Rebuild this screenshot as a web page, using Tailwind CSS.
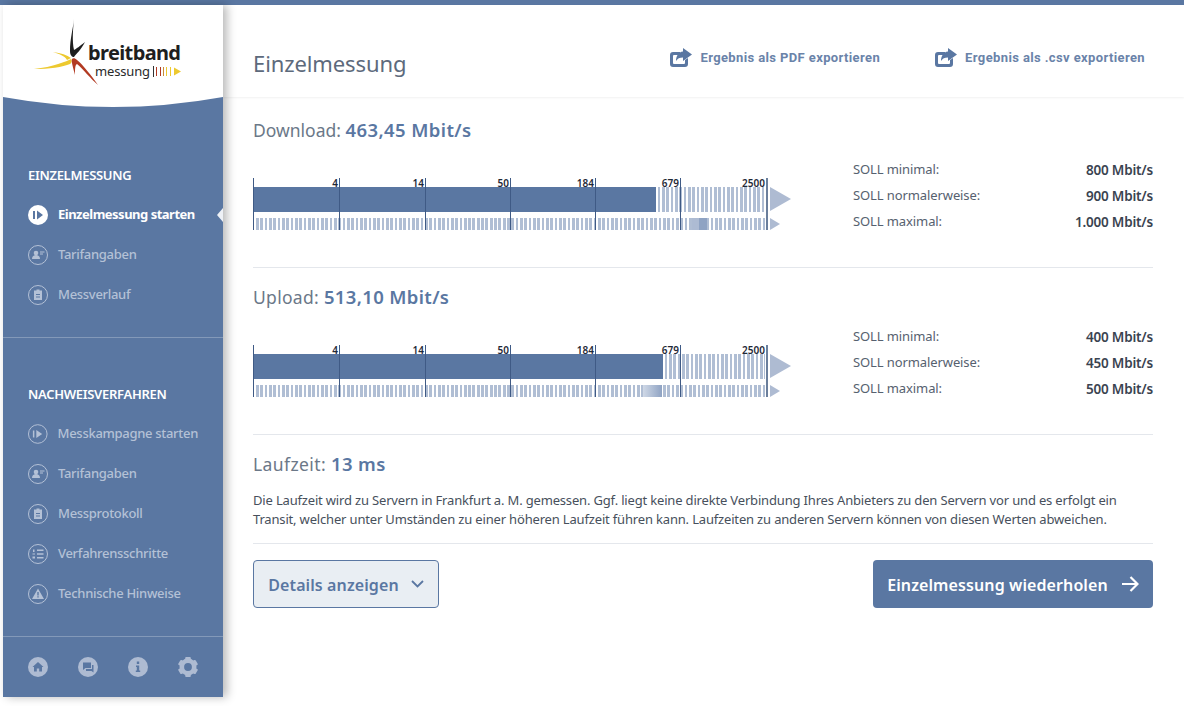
<!DOCTYPE html>
<html lang="de">

<head>
    <meta charset="UTF-8" />
    <meta name="viewport" content="width=device-width, initial-scale=1.0" />
    <title>Breitbandmessung</title>
    <script src="https://cdn.jsdelivr.net/npm/@tailwindcss/browser@4"></script>
</head>

<body class="bg-white h-[706px] overflow-hidden font-['Noto_Sans',sans-serif] text-[#4a5568]">
    <div class="h-[5px] bg-[#5a77a2]"></div>

    <div class="flex">
        <!-- sidebar -->
        <aside class="relative z-10 ml-[3px] w-[220px] h-[692px] shrink-0 bg-[#5a77a2] shadow-[4px_0_9px_rgba(0,0,0,0.28)] flex flex-col whitespace-nowrap">
            <svg class="block shrink-0" width="220" height="103" viewBox="0 0 220 103">
                <path d="M0 0H220V92Q110 112 0 92Z" fill="#fff" />
                <path d="M71 14C70 24 67 34 67 46C67 50 69 52 71 52C73 49 78 45 82 37C77 41 73 44 71 45C69 36 70 24 71 14Z" fill="#1e1e1e" />
                <path d="M68 54C64 56 50 62 31 64C46 64 60 62 67 59C69 58 69 55 68 54ZM68 53C64 50 58 48 50 47C56 49 62 51 64 55Z" fill="#edc92f" />
                <path d="M69 54C68 56 70 62 72 70C72 64 72 60 74 59C80 64 88 74 95 80C88 70 80 60 74 55C72 53 70 53 69 54Z" fill="#b23a22" />
                <text x="85" y="55" font-family="'Noto Sans',sans-serif" font-weight="700" font-size="20" fill="#1e1e1e" textLength="93">breitband</text>
                <text x="92" y="71" font-family="'Noto Sans',sans-serif" font-size="13" fill="#2a2a2a" textLength="55">messung</text>
                <path d="M150 61h1v11h-1z" fill="#333" />
                <path d="M153 62h1v9h-1zM157 62h1v9h-1z" fill="#b23a22" />
                <path d="M160 62h1v9h-1z" fill="#c98a3a" />
                <path d="M163 62h1v9h-1zM167 62h1v9h-1z" fill="#edc92f" />
                <path d="M171 62.500l7 4-7 4z" fill="#edc92f" />
            </svg>

            <div class="px-[25px] pt-[57px] text-[13px] tracking-[-0.3px] text-[#b4c1d6] font-medium">
                <h2 class="h-[20px] leading-[20px] text-[13px] font-semibold text-white">EINZELMESSUNG</h2>
                <nav class="mt-[10px] flex flex-col">
                    <a class="relative flex items-center gap-[10px] h-[40px] text-white font-bold tracking-[-0.5px]">
                        <svg width="20" height="20" viewBox="0 0 20 20"><circle cx="10" cy="10" r="10" fill="#fff" /><path d="M5 6h2v8H5zM9 5.500l6 4.500-6 4.500z" fill="#5a77a2" /></svg>
                        Einzelmessung starten
                        <span class="absolute right-[-25px] top-[13px] w-0 h-0 border-y-[7px] border-y-transparent border-r-[6px] border-r-[#eef1f6]"></span>
                    </a>
                    <a class="flex items-center gap-[10px] h-[40px]">
                        <svg width="20" height="20" viewBox="0 0 20 20"><circle cx="10" cy="10" r="9.500" fill="none" stroke="#b4c1d6" /><circle cx="8" cy="8" r="2.300" fill="#b4c1d6" /><path d="M4 14c0-3 2-4 4-4s4 1 4 4zM12 6.500h4.500v1H12zM12 8.500h3v1h-3z" fill="#b4c1d6" /></svg>
                        Tarifangaben
                    </a>
                    <a class="flex items-center gap-[10px] h-[40px]">
                        <svg width="20" height="20" viewBox="0 0 20 20"><circle cx="10" cy="10" r="9.500" fill="none" stroke="#b4c1d6" /><path d="M6 5.500h2.500V4.500h3v1H14v9.500H6zM8 9v1h4V9zM8 11.500v1h4v-1z" fill="#b4c1d6" fill-rule="evenodd" /></svg>
                        Messverlauf
                    </a>
                </nav>
            </div>

            <div class="mt-[22px] border-t border-white/25"></div>

            <div class="px-[25px] pt-[46px] text-[13px] tracking-[-0.3px] text-[#b4c1d6] font-medium">
                <h2 class="h-[20px] leading-[20px] text-[13px] font-semibold text-white">NACHWEISVERFAHREN</h2>
                <nav class="mt-[10px] flex flex-col">
                    <a class="flex items-center gap-[10px] h-[40px]">
                        <svg width="20" height="20" viewBox="0 0 20 20"><circle cx="10" cy="10" r="9.500" fill="none" stroke="#b4c1d6" /><path d="M5 6.500h1.500v7H5zM8.500 6l6 4-6 4z" fill="#b4c1d6" /></svg>
                        Messkampagne starten
                    </a>
                    <a class="flex items-center gap-[10px] h-[40px]">
                        <svg width="20" height="20" viewBox="0 0 20 20"><circle cx="10" cy="10" r="9.500" fill="none" stroke="#b4c1d6" /><circle cx="8" cy="8" r="2.300" fill="#b4c1d6" /><path d="M4 14c0-3 2-4 4-4s4 1 4 4zM12 6.500h4.500v1H12zM12 8.500h3v1h-3z" fill="#b4c1d6" /></svg>
                        Tarifangaben
                    </a>
                    <a class="flex items-center gap-[10px] h-[40px]">
                        <svg width="20" height="20" viewBox="0 0 20 20"><circle cx="10" cy="10" r="9.500" fill="none" stroke="#b4c1d6" /><path d="M6 5.500h2.500V4.500h3v1H14v9.500H6zM8 9v1h4V9zM8 11.500v1h4v-1z" fill="#b4c1d6" fill-rule="evenodd" /></svg>
                        Messprotokoll
                    </a>
                    <a class="flex items-center gap-[10px] h-[40px]">
                        <svg width="20" height="20" viewBox="0 0 20 20"><circle cx="10" cy="10" r="9.500" fill="none" stroke="#b4c1d6" /><path d="M9 5.500h6.500v1.500H9zM9 9.200h6.500v1.500H9zM9 13h6.500v1.500H9zM5 5.500h1.500v2.500H5zM4.500 9.500h2.500v1H4.500zM4.500 12.500h2.500v2H4.500z" fill="#b4c1d6" /></svg>
                        Verfahrensschritte
                    </a>
                    <a class="flex items-center gap-[10px] h-[40px]">
                        <svg width="20" height="20" viewBox="0 0 20 20"><circle cx="10" cy="10" r="9.500" fill="none" stroke="#b4c1d6" /><path d="M10 4.500l6 10.500H4zM9.300 8v3.500h1.400V8zM9.300 12.300v1.300h1.400v-1.300z" fill="#b4c1d6" fill-rule="evenodd" /></svg>
                        Technische Hinweise
                    </a>
                </nav>
            </div>

            <div class="mt-[22px] border-t border-white/25"></div>

            <div class="flex gap-[30px] px-[25px] pt-[20px]">
                <svg width="20" height="20" viewBox="0 0 20 20"><circle cx="10" cy="10" r="10" fill="#aebbd2" /><path d="M10 5l5.500 5H14v4.500h-2.800V11.500H8.800v3H6V10H4.500z" fill="#5a77a2" /></svg>
                <svg width="20" height="20" viewBox="0 0 20 20"><circle cx="10" cy="10" r="10" fill="#aebbd2" /><path d="M5 5.500h8v5.500H7.500L5 13zM14 8h1.500v7.500l-2-1.500H8v-2h6z" fill="#5a77a2" /></svg>
                <svg width="20" height="20" viewBox="0 0 20 20"><circle cx="10" cy="10" r="10" fill="#aebbd2" /><path d="M8.800 4.500h2.400v2.400H8.800zM8 8.500h3.200v5H12.200v1.500H7.800v-1.500h1V10H8z" fill="#5a77a2" /></svg>
                <svg width="20" height="20" viewBox="-10 -10 20 20">
                    <circle r="6.200" fill="none" stroke="#aebbd2" stroke-width="4.600" />
                    <g fill="#aebbd2">
                        <rect x="-2.800" y="-10" width="5.600" height="4" rx="1" />
                        <rect x="-2.800" y="-10" width="5.600" height="4" rx="1" transform="rotate(60)" />
                        <rect x="-2.800" y="-10" width="5.600" height="4" rx="1" transform="rotate(120)" />
                        <rect x="-2.800" y="-10" width="5.600" height="4" rx="1" transform="rotate(180)" />
                        <rect x="-2.800" y="-10" width="5.600" height="4" rx="1" transform="rotate(240)" />
                        <rect x="-2.800" y="-10" width="5.600" height="4" rx="1" transform="rotate(300)" />
                    </g>
                </svg>
            </div>
        </aside>

        <!-- main -->
        <main class="flex-1 min-w-0">
            <header class="h-[92px] pl-[30px] pr-[39px] flex items-center justify-between shadow-[0_1px_2px_rgba(0,0,0,0.06)]">
                <h1 class="text-[22px] tracking-[-0.1px] text-[#5d6a7c] pt-[23px] leading-[34px]">Einzelmessung</h1>
                <div class="flex items-center gap-[55px] font-['Roboto',sans-serif] font-bold text-[13px] tracking-[0.38px] text-[#6a83a9] pt-[13px]">
                    <a class="flex items-center gap-[8px]">
                        <svg width="22" height="19" viewBox="0 0 22 19"><path d="M3 4h7v3H4a1 1 0 0 0-1 1v7a1 1 0 0 0 1 1h10a1 1 0 0 0 1-1v-3l3-2v6a3 3 0 0 1-3 3H3a3 3 0 0 1-3-3V7a3 3 0 0 1 3-3z" fill="#5a77a2" /><path d="M13 0l9 6.500-9 6.500V9.500c-3.500 0-5.500 1-7 3.500C6 8 8.500 4 13 3.500z" fill="#5a77a2" /></svg>
                        Ergebnis als PDF exportieren
                    </a>
                    <a class="flex items-center gap-[8px]">
                        <svg width="22" height="19" viewBox="0 0 22 19"><path d="M3 4h7v3H4a1 1 0 0 0-1 1v7a1 1 0 0 0 1 1h10a1 1 0 0 0 1-1v-3l3-2v6a3 3 0 0 1-3 3H3a3 3 0 0 1-3-3V7a3 3 0 0 1 3-3z" fill="#5a77a2" /><path d="M13 0l9 6.500-9 6.500V9.500c-3.500 0-5.500 1-7 3.500C6 8 8.500 4 13 3.500z" fill="#5a77a2" /></svg>
                        Ergebnis als .csv exportieren
                    </a>
                </div>
            </header>

            <div class="pl-[30px] pr-[31px]">
                <!-- download -->
                <section class="h-[171px] pt-[20px] border-b border-[#e4e7ec]">
                    <h3 class="h-[26px] leading-[26px] text-[17.500px] text-[#6b7888]">Download: <span class="font-semibold text-[18.500px] tracking-[0.4px] text-[#5a77a2]">463,45 Mbit/s</span></h3>
                    <div class="mt-[35px] flex justify-between">
                        <div class="relative w-[538px] h-[55px] pt-[9px] flex flex-col gap-[6px] text-[#1f2937]">
                            <div class="flex h-[25px]">
                                <div class="w-[403px] bg-[#5a77a2]"></div>
                                <div class="w-[109px] bg-[repeating-linear-gradient(90deg,#fff_0,#fff_1.63px,#b0bed4_1.63px,#b0bed4_4.33px)]"></div>
                                <div class="ml-[5px] w-0 h-0 border-y-[12.500px] border-y-transparent border-l-[21px] border-l-[#aebbd2]"></div>
                            </div>
                            <div class="relative flex h-[12px] pl-[3px]">
                                <div class="w-[509px] bg-[repeating-linear-gradient(90deg,#b0bed4_0,#b0bed4_2.7px,#fff_2.7px,#fff_4.33px)]"></div>
                                <div class="ml-[5px] w-0 h-0 border-y-[6px] border-y-transparent border-l-[10px] border-l-[#aebbd2]"></div>
                                <div class="absolute left-[439px] top-0 h-[12px] w-[15px] bg-[linear-gradient(90deg,#adbbd3_0,#adbbd3_7px,#8fa3c3_7px)]"></div>
                            </div>
                            <span class="absolute left-0 top-0 w-px h-[52px] bg-[#3f5a85]"></span>
                            <span class="absolute left-[86px] top-0 w-px h-[52px] bg-[#3f5a85]"></span>
                            <span class="absolute left-[172px] top-0 w-px h-[52px] bg-[#3f5a85]"></span>
                            <span class="absolute left-[257px] top-0 w-px h-[52px] bg-[#3f5a85]"></span>
                            <span class="absolute left-[342px] top-0 w-px h-[52px] bg-[#3f5a85]"></span>
                            <span class="absolute left-[427px] top-0 w-px h-[52px] bg-[#3f5a85]"></span>
                            <span class="absolute left-[513px] top-0 w-[2px] h-[52px] bg-[#6b7f9c]"></span>
                            <span class="absolute right-[453px] top-0 text-[10px] leading-[10px] font-semibold">4</span>
                            <span class="absolute right-[367px] top-0 text-[10px] leading-[10px] font-semibold">14</span>
                            <span class="absolute right-[282px] top-0 text-[10px] leading-[10px] font-semibold">50</span>
                            <span class="absolute right-[197px] top-0 text-[10px] leading-[10px] font-semibold">184</span>
                            <span class="absolute right-[112px] top-0 text-[10px] leading-[10px] font-semibold">679</span>
                            <span class="absolute right-[26px] top-0 text-[10px] leading-[10px] font-semibold">2500</span>
                        </div>
                        <dl class="w-[300px] -mt-[21px] text-[13px] tracking-[-0.1px] text-[#56616f]">
                            <div class="h-[26px] flex items-center justify-between"><dt>SOLL minimal:</dt><dd class="font-semibold text-[13.500px] tracking-[-0.2px] text-[#3a4350]">800 Mbit/s</dd></div>
                            <div class="h-[26px] flex items-center justify-between"><dt>SOLL normalerweise:</dt><dd class="font-semibold text-[13.500px] tracking-[-0.2px] text-[#3a4350]">900 Mbit/s</dd></div>
                            <div class="h-[26px] flex items-center justify-between"><dt>SOLL maximal:</dt><dd class="font-semibold text-[13.500px] tracking-[-0.2px] text-[#3a4350]">1.000 Mbit/s</dd></div>
                        </dl>
                    </div>
                </section>

                <!-- upload -->
                <section class="h-[167px] pt-[16px] border-b border-[#e4e7ec]">
                    <h3 class="h-[26px] leading-[26px] text-[17.500px] tracking-[0.3px] text-[#6b7888]">Upload: <span class="font-semibold text-[18.500px] tracking-[0.35px] text-[#5a77a2]">513,10 Mbit/s</span></h3>
                    <div class="mt-[35px] flex justify-between">
                        <div class="relative w-[538px] h-[55px] pt-[9px] flex flex-col gap-[6px] text-[#1f2937]">
                            <div class="flex h-[25px]">
                                <div class="w-[410px] bg-[#5a77a2]"></div>
                                <div class="w-[102px] bg-[repeating-linear-gradient(90deg,#fff_0,#fff_1.63px,#b0bed4_1.63px,#b0bed4_4.33px)]"></div>
                                <div class="ml-[5px] w-0 h-0 border-y-[12.500px] border-y-transparent border-l-[21px] border-l-[#aebbd2]"></div>
                            </div>
                            <div class="relative flex h-[12px] pl-[3px]">
                                <div class="w-[509px] bg-[repeating-linear-gradient(90deg,#b0bed4_0,#b0bed4_2.7px,#fff_2.7px,#fff_4.33px)]"></div>
                                <div class="ml-[5px] w-0 h-0 border-y-[6px] border-y-transparent border-l-[10px] border-l-[#aebbd2]"></div>
                                <div class="absolute left-[390px] top-0 h-[12px] w-[19px] bg-[linear-gradient(90deg,#cfd8e6,#8fa3c3)]"></div>
                            </div>
                            <span class="absolute left-0 top-0 w-px h-[52px] bg-[#3f5a85]"></span>
                            <span class="absolute left-[86px] top-0 w-px h-[52px] bg-[#3f5a85]"></span>
                            <span class="absolute left-[172px] top-0 w-px h-[52px] bg-[#3f5a85]"></span>
                            <span class="absolute left-[257px] top-0 w-px h-[52px] bg-[#3f5a85]"></span>
                            <span class="absolute left-[342px] top-0 w-px h-[52px] bg-[#3f5a85]"></span>
                            <span class="absolute left-[427px] top-0 w-px h-[52px] bg-[#3f5a85]"></span>
                            <span class="absolute left-[513px] top-0 w-[2px] h-[52px] bg-[#6b7f9c]"></span>
                            <span class="absolute right-[453px] top-0 text-[10px] leading-[10px] font-semibold">4</span>
                            <span class="absolute right-[367px] top-0 text-[10px] leading-[10px] font-semibold">14</span>
                            <span class="absolute right-[282px] top-0 text-[10px] leading-[10px] font-semibold">50</span>
                            <span class="absolute right-[197px] top-0 text-[10px] leading-[10px] font-semibold">184</span>
                            <span class="absolute right-[112px] top-0 text-[10px] leading-[10px] font-semibold">679</span>
                            <span class="absolute right-[26px] top-0 text-[10px] leading-[10px] font-semibold">2500</span>
                        </div>
                        <dl class="w-[300px] -mt-[21px] text-[13px] tracking-[-0.1px] text-[#56616f]">
                            <div class="h-[26px] flex items-center justify-between"><dt>SOLL minimal:</dt><dd class="font-semibold text-[13.500px] tracking-[-0.2px] text-[#3a4350]">400 Mbit/s</dd></div>
                            <div class="h-[26px] flex items-center justify-between"><dt>SOLL normalerweise:</dt><dd class="font-semibold text-[13.500px] tracking-[-0.2px] text-[#3a4350]">450 Mbit/s</dd></div>
                            <div class="h-[26px] flex items-center justify-between"><dt>SOLL maximal:</dt><dd class="font-semibold text-[13.500px] tracking-[-0.2px] text-[#3a4350]">500 Mbit/s</dd></div>
                        </dl>
                    </div>
                </section>

                <!-- laufzeit -->
                <section class="h-[109px] pt-[16px] border-b border-[#e4e7ec]">
                    <h3 class="h-[26px] leading-[26px] text-[17.500px] tracking-[0.4px] text-[#6b7888]">Laufzeit: <span class="font-semibold text-[18.500px] tracking-[0.35px] text-[#5a77a2]">13 ms</span></h3>
                    <p class="mt-[14px] text-[13px] leading-[19px] tracking-[-0.17px] text-[#47505c]">Die Laufzeit wird zu Servern in Frankfurt a. M. gemessen. Ggf. liegt keine direkte Verbindung Ihres Anbieters zu den Servern vor und es erfolgt ein Transit, welcher unter Umständen zu einer höheren Laufzeit führen kann. Laufzeiten zu anderen Servern können von diesen Werten abweichen.</p>
                </section>

                <div class="mt-[16px] flex items-center justify-between">
                    <button class="w-[186px] h-[48px] flex items-center justify-center gap-[12px] rounded-[4px] border border-[#5a77a2] bg-[#e9eef3] text-[16px] tracking-[0.1px] font-semibold text-[#5a77a2]">
                        <span class="pt-px">Details anzeigen</span>
                        <svg width="13" height="8" viewBox="0 0 13 8"><path d="M1 1l5.500 5.500L12 1" fill="none" stroke="#5a77a2" stroke-width="1.800" /></svg>
                    </button>
                    <button class="w-[280px] h-[48px] flex items-center justify-center gap-[13px] rounded-[4px] bg-[#5a77a2] text-[16px] tracking-[0.1px] font-semibold text-white">
                        <span class="pt-px">Einzelmessung wiederholen</span>
                        <svg width="18" height="16" viewBox="0 0 18 16"><path d="M1 8h15M9.500 1l7 7-7 7" fill="none" stroke="#fff" stroke-width="2.200" /></svg>
                    </button>
                </div>
            </div>
        </main>
    </div>
</body>

</html>
